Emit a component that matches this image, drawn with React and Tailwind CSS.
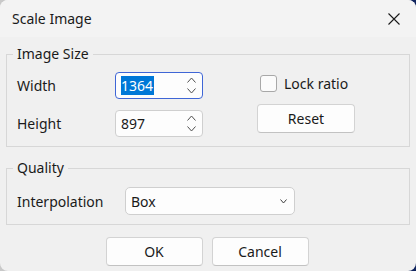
import React from "react";

const font = { fontFamily: '"Noto Sans", "Segoe UI", sans-serif' };

function Chevron({ up, className }) {
  return (
    <svg width="9" height="6" viewBox="0 0 9 6" className={className}>
      <path
        d={up ? "M0.5 5.5 L4.5 1 L8.5 5.5" : "M0.5 0.5 L4.5 5 L8.5 0.5"}
        fill="none"
        stroke="#505050"
        strokeWidth="1"
      />
    </svg>
  );
}

function SpinBox({ value, focused }) {
  return (
    <div
      className={
        "flex h-[27px] w-[88px] items-center justify-between rounded-[4px] border bg-[#fdfdfd] pl-[5px] pr-[6px] " +
        (focused ? "border-[#3f66d6]" : "border-[#cfcfcf]")
      }
    >
      {focused ? (
        <span className="bg-[#0078d7] text-white leading-[19px] pr-[1px]">{value}</span>
      ) : (
        <span className="leading-[19px]">{value}</span>
      )}
      <div className="flex flex-col gap-[5px]">
        <Chevron up />
        <Chevron />
      </div>
    </div>
  );
}

function Button({ children, className = "" }) {
  return (
    <button
      type="button"
      className={
        "flex h-[29px] w-[97px] items-center justify-center rounded-[4px] border border-[#d3d3d3] border-b-[#c2c2c2] bg-[#fdfdfd] text-[#1a1a1a] " +
        className
      }
    >
      {children}
    </button>
  );
}

export default function App() {
  return (
    <div className="h-[271px] w-[416px] bg-gradient-to-r from-[#c9c9c9] via-[#6b7690] to-[#10245e]" style={font}>
      <div className="flex h-full w-full flex-col overflow-hidden rounded-[8px] bg-[#f0f0f0] text-[14px] text-[#1a1a1a]">
        {/* title bar */}
        <div className="flex h-[37px] flex-none items-center justify-between bg-[#f3f3f3] pl-[12px] pr-[16px]">
          <span className="text-[14px] leading-[20px]">Scale Image</span>
          <svg width="12" height="12" viewBox="0 0 12 12">
            <path d="M0.5 0.5 L11.5 11.5 M11.5 0.5 L0.5 11.5" stroke="#1a1a1a" strokeWidth="1.1" />
          </svg>
        </div>

        <div className="flex flex-col px-[6px] pt-[7px]">
          <fieldset className="border border-[#d7d7d7] px-[10px] pb-[9px]">
            <legend className="-ml-[4px] px-[4px] text-[14px] leading-[20px]">Image Size</legend>
            <div className="flex pt-[8px]">
              <div className="flex flex-col gap-[11px]">
                <div className="flex items-center">
                  <span className="w-[98px]">Width</span>
                  <SpinBox value="1364" focused />
                </div>
                <div className="flex items-center">
                  <span className="w-[98px]">Height</span>
                  <SpinBox value="897" />
                </div>
              </div>
              <div className="ml-[54px] flex flex-col pt-[3px]">
                <label className="ml-[3px] flex items-center gap-[7px]">
                  <span className="h-[17px] w-[17px] rounded-[3px] border border-[#a8a8a8] bg-[#fbfbfb]" />
                  <span className="leading-[17px]">Lock ratio</span>
                </label>
                <Button className="mt-[12px] w-[98px]">Reset</Button>
              </div>
            </div>
          </fieldset>

          <fieldset className="mt-[11px] border border-[#d7d7d7] px-[10px] pb-[9px]">
            <legend className="-ml-[4px] px-[4px] text-[14px] leading-[20px]">Quality</legend>
            <div className="flex items-center pt-[9px]">
              <span className="w-[108px]">Interpolation</span>
              <div className="flex h-[28px] w-[170px] items-center justify-between rounded-[5px] border border-[#cfcfcf] bg-[#fdfdfd] pl-[5px] pr-[7px]">
                <span>Box</span>
                <svg width="7" height="5" viewBox="0 0 7 5">
                  <path d="M0.5 0.5 L3.5 4 L6.5 0.5" fill="none" stroke="#404040" strokeWidth="1" />
                </svg>
              </div>
            </div>
          </fieldset>

          <div className="mt-[12px] flex justify-center gap-[9px] pr-[2px]">
            <Button>OK</Button>
            <Button>Cancel</Button>
          </div>
        </div>
      </div>
    </div>
  );
}
